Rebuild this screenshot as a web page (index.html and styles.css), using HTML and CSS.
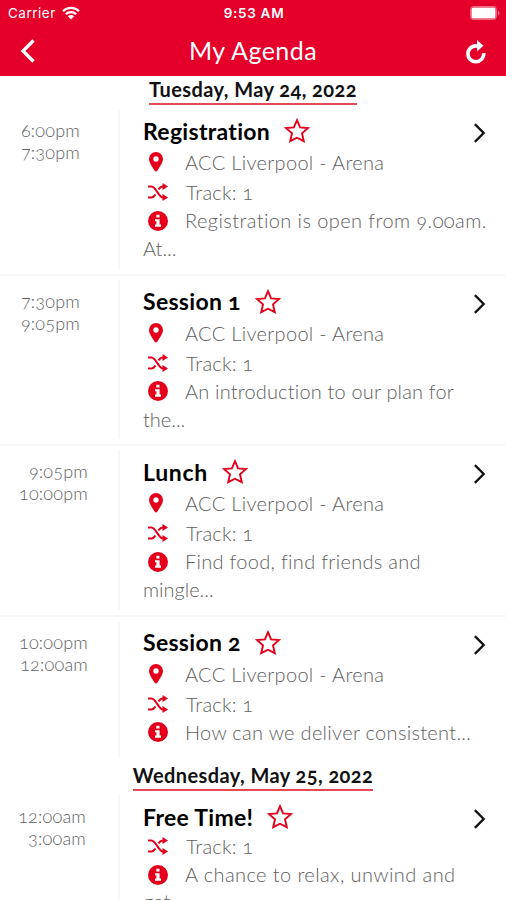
FILE: index.html
```
<!DOCTYPE html>
<html lang="en">
<head>
<meta charset="utf-8">
<title>My Agenda</title>
<link rel="stylesheet" href="styles.css">
</head>
<body>
<svg class="defs" width="0" height="0" aria-hidden="true">
  <symbol id="star" viewBox="0 0 26 26"><path d="M13 2.200l3.100 7.200 7.800.7-5.900 5.200 1.800 7.900-6.800-3.500-6.800 3.500L8 15.300 2.100 10.100l7.800-.7z" fill="none" stroke="currentColor" stroke-width="1.900"/></symbol>
  <symbol id="pin" viewBox="0 0 14 20"><path fill-rule="evenodd" d="M7 0a7 7 0 0 1 7 7c0 3.300-2.600 6.600-5.700 11.800a1.500 1.500 0 0 1-2.600 0C2.600 13.600 0 10.300 0 7a7 7 0 0 1 7-7zm0 4.300a2.700 2.700 0 1 0 0 5.400 2.700 2.700 0 0 0 0-5.400z" fill="currentColor"/></symbol>
  <symbol id="shuffle" viewBox="0 0 20 18"><path d="M0 3.500h3.500c4.500 0 7 11 11.500 11H17M0 14.500h3.500c1.700 0 2.900-1.300 4-3M10.500 6.300c1.200-1.700 2.500-2.800 4.500-2.800h2" fill="none" stroke="currentColor" stroke-width="2.200"/><path d="M14.500 0l5.500 3.500L14.500 7zM14.500 11l5.500 3.500-5.500 3.500z" fill="currentColor"/></symbol>
  <symbol id="info" viewBox="0 0 20 20"><circle cx="10" cy="10" r="10" fill="currentColor"/><path d="M8.300 3.800h3.200v2.800H8.300zM7 8.200h4.600v5.400H13v2.100H7v-2.100h1.400v-3.300H7z" fill="#fff"/></symbol>
  <symbol id="chevron" viewBox="0 0 14 22"><path d="M2 1.500L11.500 11 2 20.500" fill="none" stroke="currentColor" stroke-width="2.500"/></symbol>
</svg>
<header class="topbar">
  <div class="status">
    <div class="carrier"><span>Carrier</span>
      <svg class="wifi" viewBox="0 0 18 14"><path d="M1 5.200a11.500 11.500 0 0 1 16 0M3.800 8.200a7.500 7.500 0 0 1 10.400 0" fill="none" stroke="currentColor" stroke-width="2.200"/><path d="M9 13.600l-3.200-3.300a4.500 4.500 0 0 1 6.400 0z" fill="currentColor"/></svg>
    </div>
    <div class="clock">9:53 AM</div>
    <svg class="battery" viewBox="0 0 30 14"><rect x=".5" y=".5" width="26" height="13" rx="3" fill="none" stroke="#fff" stroke-opacity=".4"/><rect x="1.500" y="1.500" width="24" height="11" rx="1.500" fill="#fff"/><path d="M28 4.500c2 .8 2 4.200 0 5z" fill="#fff" fill-opacity=".5"/></svg>
  </div>
  <div class="nav">
    <svg class="back" viewBox="0 0 16 24"><path d="M13.500 1.500L3 12l10.500 10.500" fill="none" stroke="currentColor" stroke-width="3.300"/></svg>
    <h1>My Agenda</h1>
    <svg class="reload" viewBox="0 0 20 24"><path d="M17.700 13.200A7.900 7.900 0 1 1 10.500 6H13" fill="none" stroke="currentColor" stroke-width="3.700"/><path d="M11 0l6.500 5.700L11 11.500z" fill="currentColor"/></svg>
  </div>
</header>
<main>
  <h2 class="date"><span>Tuesday, May 24, 2022</span></h2>
  <article class="row">
    <div class="time first"><span>6:00pm</span><span>7:30pm</span></div>
    <div class="body">
      <h3><span>Registration</span><svg class="star"><use href="#star"/></svg></h3>
      <p class="meta place"><svg class="pin"><use href="#pin"/></svg><span>ACC Liverpool - Arena</span></p>
      <p class="meta track"><svg class="shuffle"><use href="#shuffle"/></svg><span>Track: 1</span></p>
      <p class="meta about loose"><svg class="info"><use href="#info"/></svg><span>Registration is open from 9.00am.</span></p>
      <p class="rest">At...</p>
    </div>
    <svg class="chevron"><use href="#chevron"/></svg>
  </article>
  <article class="row">
    <div class="time first"><span>7:30pm</span><span>9:05pm</span></div>
    <div class="body">
      <h3><span>Session 1</span><svg class="star"><use href="#star"/></svg></h3>
      <p class="meta place"><svg class="pin"><use href="#pin"/></svg><span>ACC Liverpool - Arena</span></p>
      <p class="meta track"><svg class="shuffle"><use href="#shuffle"/></svg><span>Track: 1</span></p>
      <p class="meta about snug"><svg class="info"><use href="#info"/></svg><span>An introduction to our plan for</span></p>
      <p class="rest">the...</p>
    </div>
    <svg class="chevron"><use href="#chevron"/></svg>
  </article>
  <article class="row">
    <div class="time"><span>9:05pm</span><span>10:00pm</span></div>
    <div class="body">
      <h3 class="wide"><span>Lunch</span><svg class="star"><use href="#star"/></svg></h3>
      <p class="meta place"><svg class="pin"><use href="#pin"/></svg><span>ACC Liverpool - Arena</span></p>
      <p class="meta track"><svg class="shuffle"><use href="#shuffle"/></svg><span>Track: 1</span></p>
      <p class="meta about"><svg class="info"><use href="#info"/></svg><span>Find food, find friends and</span></p>
      <p class="rest">mingle...</p>
    </div>
    <svg class="chevron"><use href="#chevron"/></svg>
  </article>
  <article class="row short">
    <div class="time"><span>10:00pm</span><span>12:00am</span></div>
    <div class="body">
      <h3><span>Session 2</span><svg class="star"><use href="#star"/></svg></h3>
      <p class="meta place"><svg class="pin"><use href="#pin"/></svg><span>ACC Liverpool - Arena</span></p>
      <p class="meta track"><svg class="shuffle"><use href="#shuffle"/></svg><span>Track: 1</span></p>
      <p class="meta about"><svg class="info"><use href="#info"/></svg><span>How can we deliver consistent...</span></p>
    </div>
    <svg class="chevron"><use href="#chevron"/></svg>
  </article>
  <h2 class="date"><span>Wednesday, May 25, 2022</span></h2>
  <article class="row last">
    <div class="time"><span>12:00am</span><span>3:00am</span></div>
    <div class="body">
      <h3><span>Free Time!</span><svg class="star"><use href="#star"/></svg></h3>
      <p class="meta track"><svg class="shuffle"><use href="#shuffle"/></svg><span>Track: 1</span></p>
      <p class="meta about loose"><svg class="info"><use href="#info"/></svg><span>A chance to relax, unwind and</span></p>
      <p class="rest">get...</p>
    </div>
    <svg class="chevron"><use href="#chevron"/></svg>
  </article>
</main>
</body>
</html>
```
FILE: styles.css
```
* { box-sizing: border-box; margin: 0; padding: 0; }
html, body { height: 900px; overflow: hidden; }
body { width: 506px; background: #fff; color: #606060; font-family: Lato, "Open Sans", sans-serif; font-weight: 300; font-feature-settings: "onum"; font-variant-ligatures: none; }
svg { display: block; flex: none; }
.defs { position: absolute; }
.topbar { height: 76px; background: #e4002b; color: #fff; }
.status { height: 26px; display: grid; grid-template-columns: 1fr auto 1fr; align-items: center; padding: 0 6px 0 8px; font: 500 13.500px Inter, sans-serif; }
.carrier { display: flex; align-items: center; gap: 6px; font-weight: 400; letter-spacing: .5px; }
.wifi { width: 18px; height: 14px; }
.clock { font-weight: 600; letter-spacing: .7px; }
.battery { width: 30px; height: 14px; justify-self: end; }
.nav { height: 50px; display: grid; grid-template-columns: 30px 1fr 30px; align-items: center; padding: 0 20px; }
.back { width: 16px; height: 24px; }
.reload { width: 20px; height: 24px; margin-top: 2px; justify-self: end; }
h1 { text-align: center; font-size: 25px; font-weight: 400; line-height: 30px; letter-spacing: .45px; padding-bottom: 2px; }
.date { height: 29px; display: flex; justify-content: center; color: #111; font-size: 20px; font-weight: 700; line-height: 27px; letter-spacing: .42px; }
.date span { border-bottom: 2px solid #e34a55; }
.row { height: 170.500px; display: grid; grid-template-columns: 118px minmax(0, 1fr) 34px; border-bottom: 2px solid #f7f7f7; }
.row.short { height: 145.500px; border-bottom: 0; }
.row.last { height: 109px; border-bottom: 0; overflow: hidden; }
.time { padding: 14px 30px 0 0; display: flex; flex-direction: column; align-items: flex-end; font-size: 18px; line-height: 22px; letter-spacing: .2px; }
.time.first { padding-right: 38px; }
.last .time { padding-right: 32px; }
.body { margin: 4px 0 5px; padding-left: 23px; border-left: 2px solid #f7f7f7; white-space: nowrap; }
h3 { height: 38px; padding-top: 5px; display: flex; align-items: center; gap: 14px; color: #000; font-size: 23px; font-weight: 700; line-height: 30px; letter-spacing: .3px; }
h3.wide { letter-spacing: .7px; }
.star { width: 26px; height: 26px; margin-top: 1px; color: #e4001b; }
.meta { display: grid; grid-template-columns: 42px 1fr; align-items: center; font-size: 20px; line-height: 30px; height: 30px; letter-spacing: .3px; }
.meta svg { color: #e4001b; }
.pin { width: 14px; height: 20px; margin-left: 6px; }
.shuffle { width: 20px; height: 18px; margin-left: 5px; }
.info { width: 20px; height: 20px; margin-left: 5px; }
.track { grid-template-columns: 43px 1fr; letter-spacing: .2px; }
.about { height: 27px; line-height: 27px; }
.about.snug { letter-spacing: .18px; }
.about.loose { letter-spacing: .41px; }
.rest { font-size: 20px; line-height: 29px; }
.last .track { height: 26px; line-height: 26px; }
.last .about { margin-top: 2px; }
.last .rest { line-height: 27px; }
.chevron { width: 13px; height: 22px; margin: 17px 0 0 1px; color: #111; }
```
